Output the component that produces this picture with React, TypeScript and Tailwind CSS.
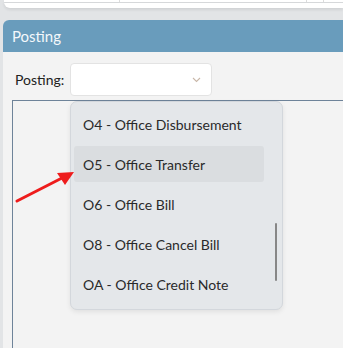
import React from 'react';

const options = [
  'O4 - Office Disbursement',
  'O5 - Office Transfer',
  'O6 - Office Bill',
  'O8 - Office Cancel Bill',
  'OA - Office Credit Note',
];

const App: React.FC = () => {
  const highlighted = 1;

  return (
    <div
      className="relative w-[343px] h-[348px] overflow-hidden bg-[#e2e4e6]"
      style={{ fontFamily: 'Lato, "Noto Sans", sans-serif' }}
    >
      {/* Previous card, only its bottom edge is visible */}
      <div className="ml-[4px] h-[8px] bg-white rounded-bl-md shadow-[0_2px_3px_rgba(0,0,0,0.08)] overflow-hidden relative">
        <div className="flex h-[3px] border-b border-[#d6d8da] text-[11px] leading-none">
          <div className="w-[115px]" />
          <div className="w-[187px] border-l border-[#dcdcdc]" />
          <div className="w-[17px] border-l border-[#dcdcdc]" />
          <div className="flex-1 border-l border-[#dcdcdc]" />
        </div>
      </div>

      {/* Posting panel */}
      <div className="mt-[12px] ml-[3px] rounded-tl-md overflow-hidden bg-[#f3f3f3] h-[340px]">
        <div className="h-[32px] bg-[#699cbc] flex items-center pl-[9px] text-[15px] text-[#f4f8fb]">
          Posting
        </div>

        <div className="flex items-center pt-[11px] pl-[12px]">
          <span className="w-[55px] text-[14px] text-[#222]">Posting:</span>
          <div className="w-[142px] h-[33px] bg-white rounded-[4px] border border-[#e3e3e3] flex items-center justify-end pr-[10px]">
            <svg width="9" height="6" viewBox="0 0 9 6">
              <polyline points="1,1 4.5,4.5 8,1" fill="none" stroke="#c9b7a8" strokeWidth="1.1" />
            </svg>
          </div>
        </div>

        <div className="mt-[4px] ml-[9px] h-[260px] border-l border-t border-[#6e8399]" />
      </div>

      {/* Dropdown list */}
      <div className="absolute left-[70px] top-[101px] w-[213px] h-[209px] bg-[#e4e7ea] rounded-[7px] border border-[#d3d7dc] shadow-[0_2px_5px_rgba(0,0,0,0.08)] pt-[2px]">
        {options.map((opt, i) => (
          <div key={opt} className="h-[40px] px-[3px] py-[2px]">
            <div
              className={`h-[36px] w-[190px] rounded-[3px] flex items-center pl-[9px] pt-[1px] text-[14px] text-[#2a2a2a] ${
                i === highlighted ? 'bg-[#dadde0]' : ''
              }`}
            >
              {opt}
            </div>
          </div>
        ))}
        <div className="absolute left-[204px] top-[121px] w-[2px] h-[58px] bg-[#878787] rounded-full" />
      </div>

      {/* Red arrow */}
      <svg className="absolute left-0 top-0" width="343" height="348">
        <line x1="17" y1="201" x2="62" y2="178" stroke="#ee1c1c" strokeWidth="3" strokeLinecap="round" />
        <polygon points="74,172 57,173 65,185" fill="#ee1c1c" />
      </svg>
    </div>
  );
};

export default App;
